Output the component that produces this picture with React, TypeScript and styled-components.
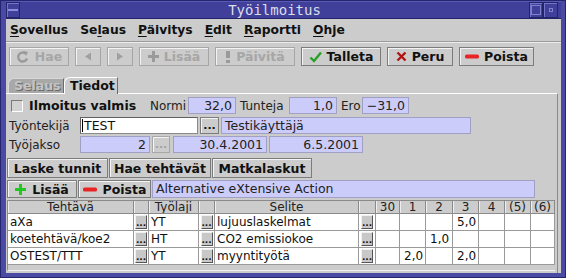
import React from 'react';
import styled, { createGlobalStyle } from 'styled-components';

const Global = createGlobalStyle`
  html, body { margin: 0; padding: 0; background: #4c4ca6; }
  body { width: 566px; height: 278px; overflow: hidden; font-family: "DejaVu Sans", "Liberation Sans", sans-serif; }
  * { box-sizing: border-box; }
`;

const Window = styled.div`
  width: 566px;
  height: 278px;
  background: #4a4aa4;
  border: 1px solid #25256e;
  padding: 0 4px 4px 5px;
  display: flex;
  flex-direction: column;
`;

const TitleBar = styled.div`
  height: 18px;
  display: flex;
  align-items: stretch;
  background: #40409a;
  border-top: 1px solid #5a5ab4;
  border-bottom: 1px solid #24246a;
  padding-right: 3px;
`;

const TitleBtn = styled.div<{ $w: number }>`
  width: ${(p) => p.$w}px;
  border: 1px solid #24246a;
  box-shadow: inset 1px 1px 0 #7474c8;
  display: flex;
  align-items: center;
  justify-content: center;
`;

const TitleText = styled.div`
  flex: 1;
  text-align: center;
  font-family: "DejaVu Sans Mono", monospace;
  font-size: 14px;
  line-height: 16px;
  color: #dcdcec;
`;

const Body = styled.div`
  flex: 1;
  background: #cccccc;
  display: flex;
  flex-direction: column;
`;

const MenuBar = styled.div`
  height: 23px;
  display: flex;
  align-items: center;
  gap: 12px;
  padding-left: 4px;
  border-bottom: 1px solid #9c9c9c;
  box-shadow: 0 1px 0 #ececec;
`;

const MenuItem = styled.span`
  font-weight: bold;
  font-size: 12.3px;
  color: #111;
  u { text-decoration: underline; text-underline-offset: 2px; }
`;

const ToolBar = styled.div`
  display: flex;
  gap: 6px;
  padding: 5px 0 0 3px;
  height: 34px;
`;

const ToolButton = styled.div<{ $w: number; $off?: boolean }>`
  width: ${(p) => p.$w}px;
  height: 19px;
  border: 1px solid ${(p) => (p.$off ? '#a6a6a6' : '#7c7c7c')};
  box-shadow: inset 1px 1px 0 #f4f4f4;
  display: flex;
  align-items: center;
  justify-content: center;
  gap: 5px;
  font-weight: bold;
  font-size: 12.5px;
  color: ${(p) => (p.$off ? '#a6a6a6' : '#111')};
`;

const TabRow = styled.div`
  display: flex;
  align-items: flex-end;
  padding-left: 2px;
  height: 17px;
`;

const Tab = styled.div<{ $active?: boolean; $w: number }>`
  width: ${(p) => p.$w}px;
  height: ${(p) => (p.$active ? 17 : 15)}px;
  background: ${(p) => (p.$active ? '#cccccc' : '#a8a8a8')};
  border-left: 1px solid ${(p) => (p.$active ? '#ffffff' : '#d8d8d8')};
  border-top: 1px solid ${(p) => (p.$active ? '#ffffff' : '#d8d8d8')};
  border-right: 1px solid #6c6c6c;
  border-top-left-radius: 6px;
  font-weight: bold;
  font-size: 12.5px;
  line-height: ${(p) => (p.$active ? 16 : 14)}px;
  padding-left: 5px;
  color: ${(p) => (p.$active ? '#111' : '#c4c4c4')};
  text-shadow: ${(p) => (p.$active ? 'none' : '1px 1px 0 #6a6a6a')};
  margin-bottom: ${(p) => (p.$active ? -1 : 0)}px;
  position: relative;
  z-index: 1;
`;

const Panel = styled.div`
  flex: 1;
  border-top: 1px solid #ffffff;
  border-right: 1px solid #8a8a8a;
  margin-right: 3px;
  display: flex;
  flex-direction: column;
  padding-left: 1px;
`;

const Row = styled.div<{ $mt: number; $h?: number }>`
  display: flex;
  align-items: center;
  margin-top: ${(p) => p.$mt}px;
  height: ${(p) => p.$h ?? 17}px;
`;

const CheckBox = styled.div`
  width: 12px;
  height: 12px;
  margin-left: 4px;
  margin-right: 6px;
  border-top: 1px solid #7a7a7a;
  border-left: 1px solid #7a7a7a;
  border-bottom: 1px solid #ffffff;
  border-right: 1px solid #ffffff;
  background: #d2d2d2;
`;

const BoldLabel = styled.span<{ $w: number }>`
  width: ${(p) => p.$w}px;
  font-weight: bold;
  font-size: 12.5px;
  color: #111;
`;

const Label = styled.span<{ $w: number; $ml?: number }>`
  width: ${(p) => p.$w}px;
  margin-left: ${(p) => p.$ml ?? 0}px;
  font-size: 12px;
  color: #222;
  white-space: nowrap;
`;

const Field = styled.div<{ $w: number; $right?: boolean; $mr?: number; $h?: number }>`
  width: ${(p) => p.$w}px;
  height: ${(p) => p.$h ?? 17}px;
  margin-right: ${(p) => p.$mr ?? 0}px;
  background: #ccccfa;
  border: 1px solid #a0a0c4;
  font-size: 12.5px;
  line-height: 15px;
  color: #222;
  padding: 0 3px;
  text-align: ${(p) => (p.$right ? 'right' : 'left')};
  white-space: nowrap;
  overflow: hidden;
`;

const Input = styled.div<{ $w: number }>`
  width: ${(p) => p.$w}px;
  height: 17px;
  background: #ffffff;
  border: 1px solid #8a8a8a;
  border-top-color: #606060;
  border-left-color: #606060;
  font-size: 12.5px;
  line-height: 15px;
  color: #111;
  padding-left: 1px;
  display: flex;
  align-items: center;
`;

const Caret = styled.span`
  width: 1px;
  height: 13px;
  background: #000;
  margin-right: 1px;
`;

const DotsButton = styled.div<{ $w: number; $mr?: number; $ml?: number; $off?: boolean }>`
  width: ${(p) => p.$w}px;
  height: 17px;
  margin-right: ${(p) => p.$mr ?? 0}px;
  margin-left: ${(p) => p.$ml ?? 0}px;
  border: 1px solid ${(p) => (p.$off ? '#a8a8a8' : '#7c7c7c')};
  box-shadow: inset 1px 1px 0 #f4f4f4;
  background: #cccccc;
  font-weight: bold;
  font-size: 11px;
  color: ${(p) => (p.$off ? '#a4a4a4' : '#111')};
  display: flex;
  align-items: flex-end;
  justify-content: center;
  line-height: 13px;
  padding-bottom: 1px;
`;

const ActionRow = styled.div<{ $mt: number; $h: number }>`
  display: flex;
  gap: 1px;
  margin-top: ${(p) => p.$mt}px;
  height: ${(p) => p.$h}px;
`;

const ActionButton = styled.div<{ $w: number }>`
  width: ${(p) => p.$w}px;
  height: 100%;
  border: 1px solid #7c7c7c;
  box-shadow: inset 1px 1px 0 #f4f4f4;
  display: flex;
  align-items: center;
  justify-content: center;
  gap: 6px;
  font-weight: bold;
  font-size: 12.5px;
  color: #111;
`;

const Table = styled.div`
  margin-top: 2px;
  width: 548px;
  height: 71px;
  border-top: 1px solid #8a8a8a;
  border-left: 1px solid #8a8a8a;
  border-bottom: 1px solid #f0f0f0;
  display: grid;
  grid-template-columns: 126px 15px 50px 16px 144px 17px 24px 26px 27px 26px 26px 26px 24px;
  grid-template-rows: 13px 17px 17px 17px;
  align-content: start;
`;

const HeadCell = styled.div`
  background: #cccccc;
  border-right: 1px solid #8a8a8a;
  border-bottom: 1px solid #8a8a8a;
  box-shadow: inset 1px 0 0 #eeeeee;
  font-size: 12px;
  line-height: 12px;
  text-align: center;
  color: #222;
  white-space: nowrap;
  overflow: hidden;
`;

const Cell = styled.div<{ $pl?: number }>`
  background: #ffffff;
  border-right: 1px solid #9a9a9a;
  border-bottom: 1px solid #9a9a9a;
  font-size: 12px;
  line-height: 16px;
  padding-left: ${(p) => p.$pl ?? 2}px;
  color: #111;
  white-space: nowrap;
  overflow: hidden;
`;

const BtnCell = styled.div`
  background: #ffffff;
  border-right: 1px solid #9a9a9a;
  border-bottom: 1px solid #9a9a9a;
  display: flex;
  align-items: center;
  justify-content: center;
`;

const MiniButton = styled.div`
  width: 12px;
  height: 14px;
  background: #c8c8c8;
  border-right: 1px solid #555;
  border-bottom: 1px solid #555;
  border-top: 1px solid #f0f0f0;
  border-left: 1px solid #f0f0f0;
  font-size: 9px;
  font-weight: bold;
  line-height: 10px;
  color: #111;
  display: flex;
  align-items: flex-end;
  justify-content: center;
`;

const RefreshIcon = () => (
  <svg width="14" height="14" viewBox="0 0 14 14">
    <path d="M11 8.5 A4.5 4.5 0 1 1 9.5 3.5" fill="none" stroke="#9a9a9a" strokeWidth="2.4" />
    <path d="M7.5 1 L12 2 L10 6 Z" fill="#9a9a9a" />
  </svg>
);

const Tri = ({ dir }: { dir: 'l' | 'r' }) => (
  <svg width="8" height="9" viewBox="0 0 8 9">
    <path d={dir === 'l' ? 'M7 0.5 L7 8.5 L1 4.5 Z' : 'M1 0.5 L1 8.5 L7 4.5 Z'} fill="#a0a0a0" />
  </svg>
);

const Plus = ({ c }: { c: string }) => (
  <svg width="11" height="11" viewBox="0 0 11 11">
    <path d="M4 0 H7 V4 H11 V7 H7 V11 H4 V7 H0 V4 H4 Z" fill={c} />
  </svg>
);

const Bang = () => (
  <svg width="6" height="12" viewBox="0 0 6 12">
    <rect x="1" y="0" width="4" height="7" fill="#9a9a9a" />
    <rect x="1" y="9" width="4" height="3" fill="#9a9a9a" />
  </svg>
);

const Check = () => (
  <svg width="13" height="12" viewBox="0 0 13 12">
    <path d="M1.5 6.5 L5 10 L12 1.5" fill="none" stroke="#28a028" strokeWidth="2.4" />
  </svg>
);

const Cross = () => (
  <svg width="11" height="11" viewBox="0 0 11 11">
    <path d="M1.5 1.5 L9.5 9.5 M9.5 1.5 L1.5 9.5" stroke="#b01414" strokeWidth="2.4" />
  </svg>
);

const Minus = () => (
  <svg width="14" height="5" viewBox="0 0 14 5">
    <rect x="0" y="0.5" width="14" height="4" rx="1.5" fill="#e82424" />
  </svg>
);

const cols = ['Tehtävä', '', 'Työlaji', '', 'Selite', '', '30', '1', '2', '3', '4', '(5)', '(6)'];
const rows = [
  { t: 'aXa', l: 'YT', s: 'lujuuslaskelmat', v: ['', '', '', '5,0', '', '', ''] },
  { t: 'koetehtävä/koe2', l: 'HT', s: 'CO2 emissiokoe', v: ['', '', '1,0', '', '', '', ''] },
  { t: 'OSTEST/TTT', l: 'YT', s: 'myyntityötä', v: ['', '2,0', '', '2,0', '', '', ''] },
];

export default function App() {
  return (
    <>
      <Global />
      <Window>
        <TitleBar>
          <TitleBtn $w={14}>
            <svg width="10" height="4" viewBox="0 0 10 4">
              <rect x="0" y="1" width="10" height="2" fill="#8c8cd8" />
            </svg>
          </TitleBtn>
          <TitleText>Työilmoitus</TitleText>
          <TitleBtn $w={14}>
            <svg width="10" height="10" viewBox="0 0 10 10">
              <rect x="0.5" y="0.5" width="9" height="9" fill="none" stroke="#8080cc" />
            </svg>
          </TitleBtn>
          <TitleBtn $w={15}>
            <svg width="4" height="4" viewBox="0 0 4 4">
              <rect x="0.5" y="0.5" width="3" height="3" fill="none" stroke="#8080cc" />
            </svg>
          </TitleBtn>
        </TitleBar>
        <Body>
          <MenuBar>
            <MenuItem><u>S</u>ovellus</MenuItem>
            <MenuItem>Se<u>l</u>aus</MenuItem>
            <MenuItem><u>P</u>äivitys</MenuItem>
            <MenuItem><u>E</u>dit</MenuItem>
            <MenuItem><u>R</u>aportti</MenuItem>
            <MenuItem><u>O</u>hje</MenuItem>
          </MenuBar>
          <ToolBar>
            <ToolButton $w={60} $off><RefreshIcon />Hae</ToolButton>
            <ToolButton $w={26} $off><Tri dir="l" /></ToolButton>
            <ToolButton $w={26} $off><Tri dir="r" /></ToolButton>
            <ToolButton $w={70} $off><Plus c="#9a9a9a" />Lisää</ToolButton>
            <ToolButton $w={80} $off><Bang />Päivitä</ToolButton>
            <ToolButton $w={80}><Check />Talleta</ToolButton>
            <ToolButton $w={66}><Cross />Peru</ToolButton>
            <ToolButton $w={75}><Minus />Poista</ToolButton>
          </ToolBar>
          <TabRow>
            <Tab $w={56}>Selaus</Tab>
            <Tab $w={54} $active>Tiedot</Tab>
          </TabRow>
          <Panel>
            <Row $mt={3}>
              <CheckBox />
              <BoldLabel $w={121}>Ilmoitus valmis</BoldLabel>
              <Label $w={38}>Normi</Label>
              <Field $w={48} $right $mr={4}>32,0</Field>
              <Label $w={49}>Tunteja</Label>
              <Field $w={48} $right $mr={4}>1,0</Field>
              <Label $w={21}>Ero</Label>
              <Field $w={47} $right>−31,0</Field>
            </Row>
            <Row $mt={3}>
              <Label $w={71} $ml={2}>Työntekijä</Label>
              <Input $w={118}><Caret />TEST</Input>
              <DotsButton $w={19} $mr={2} $ml={2}>...</DotsButton>
              <Field $w={250}>Testikäyttäjä</Field>
            </Row>
            <Row $mt={2}>
              <Label $w={71} $ml={2}>Työjakso</Label>
              <Field $w={70} $right $mr={2}>2</Field>
              <DotsButton $w={18} $mr={3} $off>...</DotsButton>
              <Field $w={94} $right $mr={2}>30.4.2001</Field>
              <Field $w={94} $right>6.5.2001</Field>
            </Row>
            <ActionRow $mt={5} $h={20}>
              <ActionButton $w={101}>Laske tunnit</ActionButton>
              <ActionButton $w={102}>Hae tehtävät</ActionButton>
              <ActionButton $w={100}>Matkalaskut</ActionButton>
            </ActionRow>
            <ActionRow $mt={2} $h={18}>
              <ActionButton $w={70}><Plus c="#22c822" />Lisää</ActionButton>
              <ActionButton $w={73}><Minus />Poista</ActionButton>
              <Field $w={383} $h={18}>Alternative eXtensive Action</Field>
            </ActionRow>
            <Table>
              {cols.map((c, i) => (
                <HeadCell key={'h' + i}>{c}</HeadCell>
              ))}
              {rows.map((r, ri) => (
                <React.Fragment key={ri}>
                  <Cell>{r.t}</Cell>
                  <BtnCell><MiniButton>...</MiniButton></BtnCell>
                  <Cell>{r.l}</Cell>
                  <BtnCell><MiniButton>...</MiniButton></BtnCell>
                  <Cell>{r.s}</Cell>
                  <BtnCell><MiniButton>...</MiniButton></BtnCell>
                  {r.v.map((v, vi) => (
                    <Cell key={vi} $pl={4}>{v}</Cell>
                  ))}
                </React.Fragment>
              ))}
            </Table>
          </Panel>
        </Body>
      </Window>
    </>
  );
}
